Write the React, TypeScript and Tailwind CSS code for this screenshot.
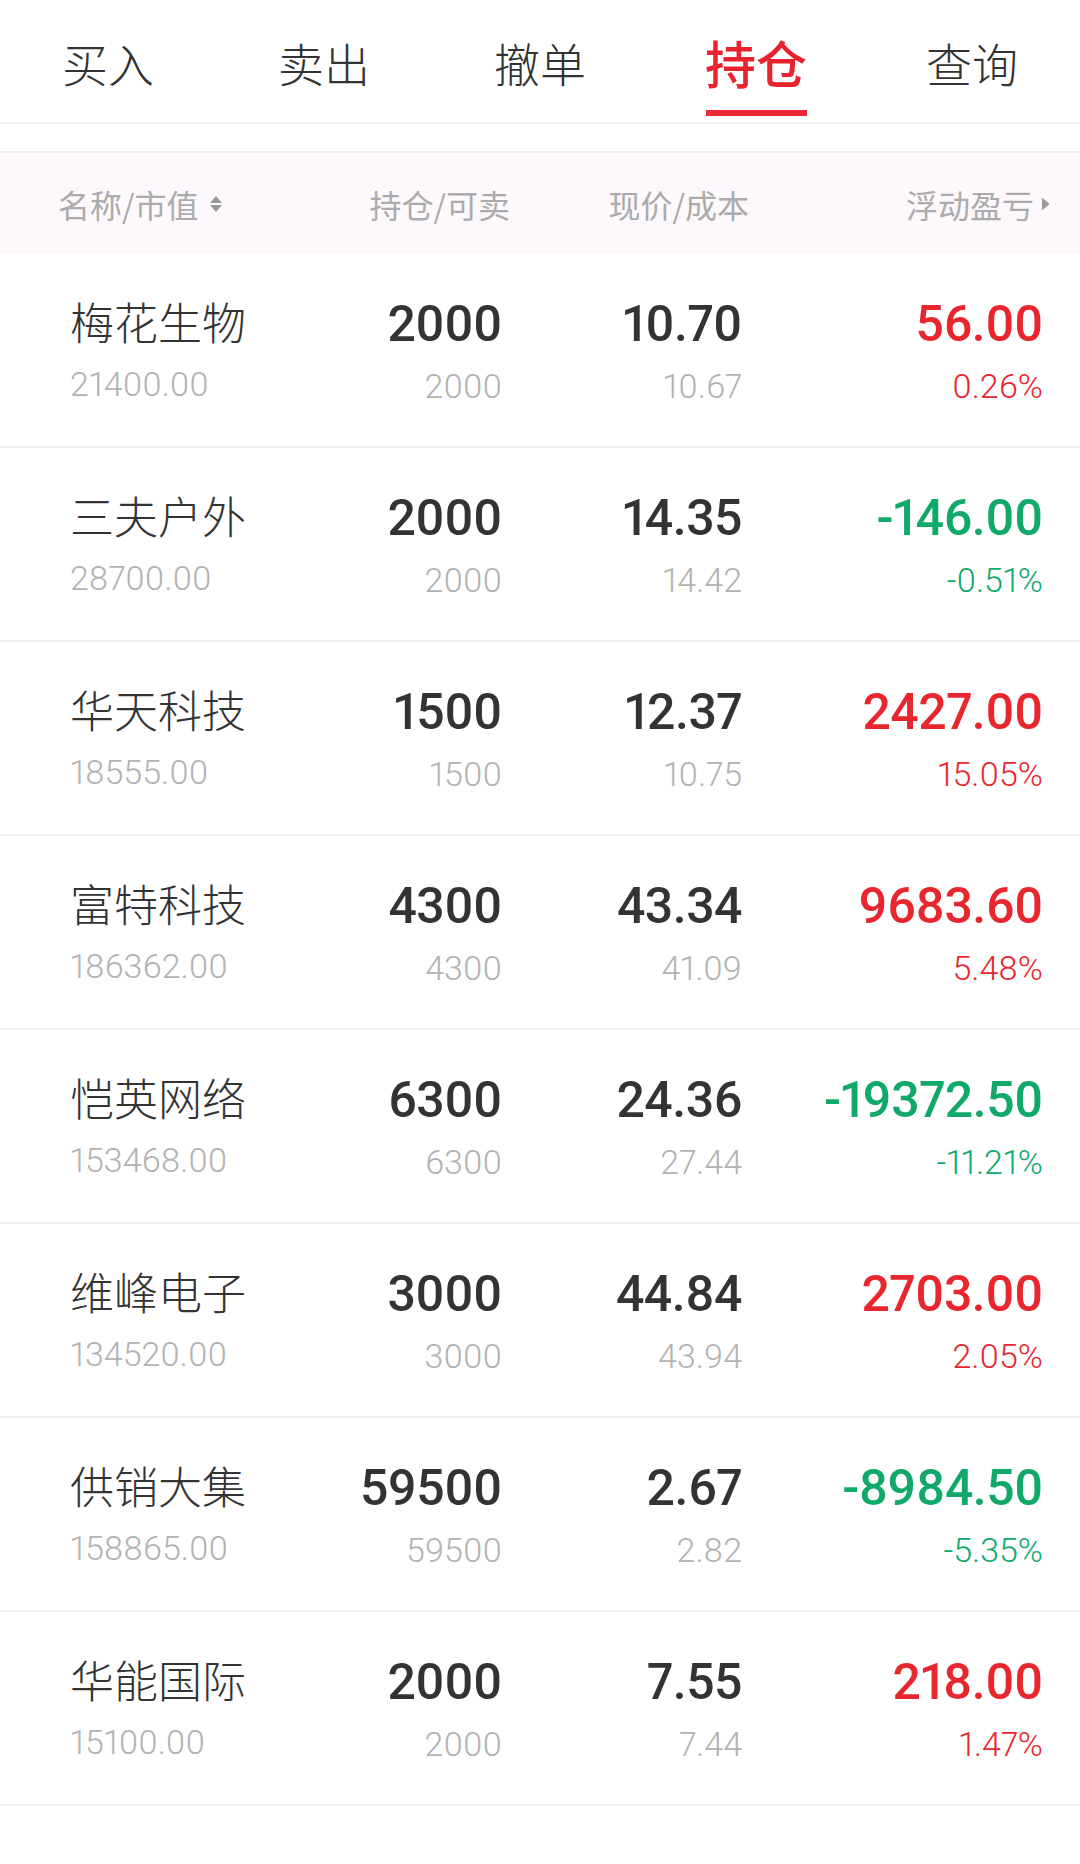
import React from 'react';

const tabs = ['买入', '卖出', '撤单', '持仓', '查询'];

const positions = [
  { name: '梅花生物', value: '21400.00', qty: '2000', avail: '2000', price: '10.70', cost: '10.67', pnl: '56.00', pct: '0.26%', up: true },
  { name: '三夫户外', value: '28700.00', qty: '2000', avail: '2000', price: '14.35', cost: '14.42', pnl: '-146.00', pct: '-0.51%', up: false },
  { name: '华天科技', value: '18555.00', qty: '1500', avail: '1500', price: '12.37', cost: '10.75', pnl: '2427.00', pct: '15.05%', up: true },
  { name: '富特科技', value: '186362.00', qty: '4300', avail: '4300', price: '43.34', cost: '41.09', pnl: '9683.60', pct: '5.48%', up: true },
  { name: '恺英网络', value: '153468.00', qty: '6300', avail: '6300', price: '24.36', cost: '27.44', pnl: '-19372.50', pct: '-11.21%', up: false },
  { name: '维峰电子', value: '134520.00', qty: '3000', avail: '3000', price: '44.84', cost: '43.94', pnl: '2703.00', pct: '2.05%', up: true },
  { name: '供销大集', value: '158865.00', qty: '59500', avail: '59500', price: '2.67', cost: '2.82', pnl: '-8984.50', pct: '-5.35%', up: false },
  { name: '华能国际', value: '15100.00', qty: '2000', avail: '2000', price: '7.55', cost: '7.44', pnl: '218.00', pct: '1.47%', up: true },
];

const cjk = "font-['Noto_Sans_CJK_SC','Noto_Sans',sans-serif]";
const num = "font-['Roboto','Noto_Sans_CJK_SC',sans-serif] proportional-nums";

function SortIcon() {
  return (
    <svg width="16" height="18" viewBox="0 0 16 18" className="ml-[9px]">
      <path d="M8 1 L14 8 L2 8 Z" fill="#9a9a9a" />
      <path d="M2 10 L14 10 L8 17 Z" fill="#9a9a9a" />
    </svg>
  );
}

function ArrowIcon() {
  return (
    <svg width="9" height="14" viewBox="0 0 9 14" className="ml-[7px]">
      <path d="M1 0.5 L8.5 7 L1 13.5 Z" fill="#9a9a9a" />
    </svg>
  );
}

export default function App() {
  return (
    <div className="w-[1080px] h-[1864px] bg-white overflow-hidden">
      {/* Tabs */}
      <div className="grid grid-cols-5 h-[124px] border-b-2 border-[#ededed]">
        {tabs.map((tab, i) => {
          const active = i === 3;
          return (
            <div key={tab} className="flex flex-col items-center pt-[34px]">
              <span
                className={`${cjk} leading-[56px] ${
                  active ? 'text-[51px] font-medium text-[#e8232d]' : 'text-[46px] font-light text-[#333333]'
                }`}
              >
                {tab}
              </span>
              {active && <div className="mt-[20px] w-[101px] h-[6px] bg-[#ec2a36]" />}
            </div>
          );
        })}
      </div>

      {/* Table header */}
      <div className="mt-[27px] border-t-2 border-[#ededed] bg-[#fdf8fb] h-[103px] flex items-center pl-[58px] pr-[30px]">
        <div className={`${cjk} w-[242px] flex items-center text-[32px] text-[#ababab]`}>
          名称/市值
          <SortIcon />
        </div>
        <div className={`${cjk} w-[210px] text-right text-[32px] text-[#ababab]`}>持仓/可卖</div>
        <div className={`${cjk} w-[239px] text-right text-[32px] text-[#ababab]`}>现价/成本</div>
        <div className={`${cjk} flex-1 flex items-center justify-end text-[32px] text-[#ababab]`}>
          浮动盈亏
          <ArrowIcon />
        </div>
      </div>

      {/* Rows */}
      {positions.map((p) => {
        const color = p.up ? 'text-[#e8262e]' : 'text-[#10a96a]';
        return (
          <div key={p.name} className="h-[194px] border-b-2 border-[#ededed] flex pl-[70px] pr-[37px] pt-[41px]">
            <div className="w-[230px] flex flex-col">
              <span className={`${cjk} text-[44px] leading-[52px] font-light text-[#333333]`}>{p.name}</span>
              <span className={`${num} mt-[17px] text-[34px] leading-[40px] font-light text-[#b2b2b2]`}>{p.value}</span>
            </div>
            <div className="w-[202px] flex flex-col items-end">
              <span className={`${num} mt-[3px] text-[50px] leading-[52px] font-medium tracking-[-0.5px] text-[#333333]`}>{p.qty}</span>
              <span className={`${num} mt-[16px] text-[34px] leading-[40px] font-light text-[#b2b2b2]`}>{p.avail}</span>
            </div>
            <div className="w-[240px] flex flex-col items-end">
              <span className={`${num} mt-[3px] text-[50px] leading-[52px] font-medium tracking-[-0.5px] text-[#333333]`}>{p.price}</span>
              <span className={`${num} mt-[16px] text-[34px] leading-[40px] font-light text-[#b2b2b2]`}>{p.cost}</span>
            </div>
            <div className="flex-1 flex flex-col items-end">
              <span className={`${num} mt-[3px] text-[50px] leading-[52px] font-medium tracking-[-0.5px] ${color}`}>{p.pnl}</span>
              <span className={`${num} mt-[16px] text-[34px] leading-[40px] font-light ${color}`}>{p.pct}</span>
            </div>
          </div>
        );
      })}
    </div>
  );
}
